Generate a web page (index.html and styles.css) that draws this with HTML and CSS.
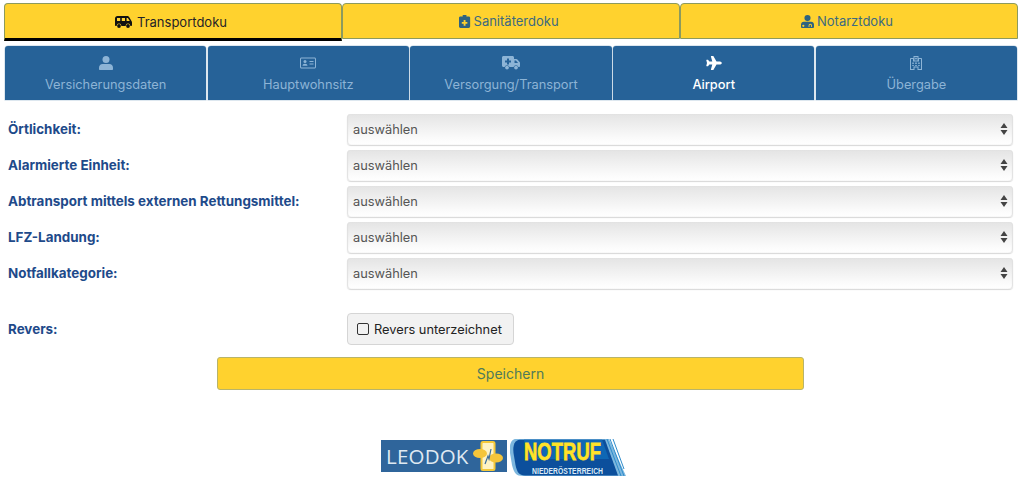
FILE: index.html
```html
<!DOCTYPE html>
<html lang="de">
<head>
<meta charset="utf-8">
<title>Airport</title>
<link rel="stylesheet" href="styles.css">
</head>
<body>
<nav class="doc-tabs">
  <a class="doc-tab active"><svg class="ic van" viewBox="0 0 17 12"><path fill-rule="evenodd" d="M2.500 0h9.500c1 0 1.800.5 2.300 1.300L16.500 5c.3.500.5 1 .5 1.600V9c0 .6-.4 1-1 1h-.6a2.400 2.400 0 0 0-4.800 0H6.400a2.400 2.400 0 0 0-4.800 0H1c-.6 0-1-.4-1-1V2.500C0 1.100 1.100 0 2.500 0zM2 2v3h3.200V2zm4.800 0v3H10V2zm4.800 0v3h3.200l-1.600-2.600c-.2-.3-.4-.4-.7-.4z"/><circle cx="4" cy="10" r="1.900"/><circle cx="13" cy="10" r="1.900"/></svg> Transportdoku</a>
  <a class="doc-tab"><svg class="ic clip" viewBox="0 0 12 14"><path fill-rule="evenodd" d="M4 0h4v1.500h2.500c.8 0 1.500.7 1.500 1.500v9.500c0 .8-.7 1.500-1.500 1.500h-9C.7 14 0 13.300 0 12.500V3c0-.8.7-1.500 1.500-1.500H4zM5 5.500v2H3v2h2v2h2v-2h2v-2H7v-2z"/></svg> Sanitäterdoku</a>
  <a class="doc-tab"><svg class="ic doc" viewBox="0 0 14 14"><circle cx="7" cy="3.300" r="3.300"/><path fill-rule="evenodd" d="M3 7.300h8c1.700 0 3 1.300 3 3V13c0 .6-.4 1-1 1H1c-.6 0-1-.4-1-1v-2.700c0-1.700 1.300-3 3-3zM2.500 12.800a1.200 1.200 0 1 0 0-2.400 1.200 1.200 0 0 0 0 2.400zM10 9.500c-1 0-1.800.8-1.800 1.800v1.500h.9v-1.500c0-.5.400-.9.900-.9s.9.400.9.900v1.500h.9v-1.500c0-1-.8-1.800-1.800-1.800z"/></svg> Notarztdoku</a>
</nav>

<nav class="sec-tabs">
  <a class="sec-tab"><svg class="sec-ic" viewBox="0 0 14 14"><circle cx="7" cy="3.500" r="3.500"/><path d="M3.500 8h7c1.900 0 3.500 1.600 3.500 3.500V13c0 .6-.4 1-1 1H1c-.6 0-1-.4-1-1v-1.500C0 9.600 1.600 8 3.500 8z"/></svg><span>Versicherungsdaten</span></a>
  <a class="sec-tab"><svg class="sec-ic" viewBox="0 0 16 14"><path fill-rule="evenodd" d="M1.500 1.500h13c.8 0 1.500.7 1.500 1.500v8c0 .8-.7 1.500-1.500 1.500h-13C.7 12.500 0 11.800 0 11V3c0-.8.7-1.500 1.500-1.500zm0 1a.5.500 0 0 0-.5.5v8c0 .3.2.5.5.5h13c.3 0 .5-.2.5-.5V3a.5.500 0 0 0-.5-.5z"/><circle cx="5" cy="5.600" r="1.500"/><path d="M2.500 9.800c0-1.300 1-2 2.500-2s2.500.7 2.500 2zM9.500 5h4v1h-4zM9.500 7.500h4v1h-4z"/></svg><span>Hauptwohnsitz</span></a>
  <a class="sec-tab"><svg class="sec-ic" viewBox="0 0 18 14"><path fill-rule="evenodd" d="M1.500 0h9C11.300 0 12 .7 12 1.500V3h2.300c.4 0 .8.200 1.100.500l2 2.200c.4.300.6.800.6 1.200V10c0 .6-.4 1-1 1h-.6a2.500 2.500 0 0 0-4.800 0H7.400a2.500 2.500 0 0 0-4.800 0H1.500C.7 11 0 10.300 0 9.500v-8C0 .7.700 0 1.500 0zM5 2.500v2H3v2h2v2h2v-2h2v-2H7v-2zM12.500 4.500V7h3.600l-2.200-2.500z"/><circle cx="5" cy="11.600" r="1.900"/><circle cx="14" cy="11.600" r="1.900"/></svg><span>Versorgung/Transport</span></a>
  <a class="sec-tab current"><svg class="sec-ic plane" viewBox="0 0 16 14"><path d="M15.800 7c0 1-1.400 1.500-2.300 1.500h-3l-3 5.200c-.1.200-.3.300-.5.300H5.300c-.3 0-.5-.3-.4-.6L6.300 8.500H3.400L2.200 10c-.1.100-.2.200-.4.200H.7c-.3 0-.5-.2-.4-.5L1 7 .3 4.300c-.1-.3.100-.5.400-.5h1.100c.2 0 .3.100.4.200l1.200 1.500h2.900L4.900.6C4.800.3 5 0 5.300 0H7c.2 0 .4.100.5.300l3 5.200h3c.9 0 2.300.5 2.300 1.500z"/></svg><span>Airport</span></a>
  <a class="sec-tab"><svg class="sec-ic" viewBox="0 0 12 14"><path fill-rule="evenodd" d="M3.500 0h5v2H11c.6 0 1 .4 1 1v11H7.500v-2.500h-3V14H0V3c0-.6.400-1 1-1h2.500zm1 1v3.500h3V1zM1 3v10h2.500v-2.500h5V13H11V3H9v2.500H3V3zM5.600 1.500h.8v.7h.7v.8h-.7v.7h-.8V3h-.7v-.8h.7zM2.300 6.500h1.500V8H2.300zM5.200 6.500h1.600V8H5.200zM8.200 6.500h1.500V8H8.200zM2.300 9h1.500v1H2.300zM8.200 9h1.500v1H8.200zM5.200 9h1.600v1H5.200z"/></svg><span>Übergabe</span></a>
</nav>

<form class="form">
  <div class="fields">
    <div class="row"><label class="lbl">Örtlichkeit:</label><div class="select"><span>auswählen</span><svg class="arrows" viewBox="0 0 8 12"><path d="M4 0l3.500 5H.5zM4 12L.5 7h7z"/></svg></div></div>
    <div class="row"><label class="lbl">Alarmierte Einheit:</label><div class="select"><span>auswählen</span><svg class="arrows" viewBox="0 0 8 12"><path d="M4 0l3.500 5H.5zM4 12L.5 7h7z"/></svg></div></div>
    <div class="row"><label class="lbl">Abtransport mittels externen Rettungsmittel:</label><div class="select"><span>auswählen</span><svg class="arrows" viewBox="0 0 8 12"><path d="M4 0l3.500 5H.5zM4 12L.5 7h7z"/></svg></div></div>
    <div class="row"><label class="lbl">LFZ-Landung:</label><div class="select"><span>auswählen</span><svg class="arrows" viewBox="0 0 8 12"><path d="M4 0l3.500 5H.5zM4 12L.5 7h7z"/></svg></div></div>
    <div class="row"><label class="lbl">Notfallkategorie:</label><div class="select"><span>auswählen</span><svg class="arrows" viewBox="0 0 8 12"><path d="M4 0l3.500 5H.5zM4 12L.5 7h7z"/></svg></div></div>
  </div>
  <div class="row revers"><label class="lbl">Revers:</label><div class="check-btn"><span class="box"></span>Revers unterzeichnet</div></div>
  <div class="save-wrap"><div class="save">Speichern</div></div>
</form>

<footer class="logos">
  <div class="leodok"><span class="leo-text">LEODOK</span><svg class="leo-mark" viewBox="0 0 30 32"><rect x="8.500" y="2" width="13" height="28" rx="1.500" fill="#fff3c4" stroke="#f5c93a" stroke-width="2"/><ellipse cx="7" cy="13.500" rx="7" ry="4.500" fill="#f5c53a"/><ellipse cx="23" cy="18" rx="7" ry="4.500" fill="#f5c53a"/><path d="M12 24l3-8 1 3 2-10" fill="none" stroke="#3b6d9c" stroke-width="1.200"/></svg></div>
  <div class="notruf">
    <svg class="notruf-bg" viewBox="0 0 116 37" preserveAspectRatio="none">
      <path d="M6 0H99L116 37H13C6 37 4 34 2 26L0 14C-1 6 1 0 6 0z" fill="#7db7de"/>
      <path d="M10 0.800H95L108 36.500H15C9 36.500 7 33 5.500 26L3.500 14C2.500 6 5 .8 10 .8z" fill="#0c4f9c"/>
      <path d="M14 .8H92L99 20H18z" fill="#0f67b4"/>
      <path d="M97 0l14 37M100 0l14 37M103 0l11 30" stroke="#2f8ccb" stroke-width="1"/>
    </svg>
    <span class="nt-big">NOTRUF</span>
    <span class="nt-small">NIEDERÖSTERREICH</span>
  </div>
</footer>
</body>
</html>
```

FILE: styles.css
```css
* { box-sizing: border-box; }
html, body { margin: 0; background: #fff; }
body {
  width: 1024px;
  height: 495px;
  overflow: hidden;
  font-family: Inter, "Liberation Sans", sans-serif;
  font-size: 14px;
  padding: 3px 6px 0 4px;
}
.doc-tabs { display: flex; height: 38px; align-items: flex-start; }
.doc-tab {
  flex: 1;
  height: 36px;
  background: #ffd22e;
  border: 1px solid #8c9a5e;
  border-radius: 4px 4px 0 0;
  display: flex;
  align-items: center;
  justify-content: center;
  gap: 3px;
  padding-right: 4px;
  color: #3c6a80;
  font-size: 13px;
}
.doc-tab.active {
  height: 38px;
  color: #1f2328;
  border-bottom: 3px solid #000;
  padding-top: 1px;
}
.ic { fill: #2f6380; height: 13px; width: auto; display: block; }
.van { fill: #111; height: 12px; margin-right: 2px; }
.sec-tabs { display: flex; gap: 1.500px; margin: 5px 1px 0 1px; height: 54px; }
.sec-tab {
  flex: 1;
  background: #266298;
  border-radius: 3px 3px 0 0;
  color: #8db4d6;
  display: flex;
  flex-direction: column;
  align-items: center;
  font-size: 12.800px;
  padding-top: 10px;
  box-shadow: 0 0 0 .5px #bcd0e0;
}
.sec-tab span { margin-top: 6px; line-height: 17px; }
.sec-ic { height: 14px; width: auto; fill: #8db4d6; display: block; }
.sec-tab.current { color: #fff; font-weight: 500; }
.sec-tab.current .sec-ic { fill: #fff; }
.form { padding-top: 13.500px; }
.fields { display: flex; flex-direction: column; gap: 4.500px; }
.row { display: flex; align-items: center; height: 31.500px; }
.lbl {
  width: 343px;
  padding-left: 4px;
  font-weight: 700;
  font-size: 13.400px;
  color: #1e4a8a;
  flex: none;
  white-space: nowrap;
}
.select {
  width: 666px;
  height: 31.500px;
  border-radius: 4px;
  display: flex;
  align-items: center;
  justify-content: space-between;
  padding: 0 5px 0 6px;
  color: #555;
  font-size: 12.800px;
  background: linear-gradient(#e4e4e4, #fbfbfb 80%, #fff);
  box-shadow: inset 1px 0 1px #e0e0e0, inset -1px 0 1px #e0e0e0, 0 1px 1px #d8d8d8;
}
.arrows { width: 8px; height: 12px; fill: #444; }
.revers { margin-top: 24px; height: 32px; }
.check-btn {
  height: 32px;
  width: 167px;
  border: 1px solid #d5d5d5;
  border-radius: 4px;
  background: #f2f2f2;
  display: flex;
  align-items: center;
  padding-left: 9px;
  gap: 5px;
  color: #222;
  font-size: 12.800px;
  white-space: nowrap;
}
.box { width: 12px; height: 12px; border: 1.500px solid #333; border-radius: 2px; flex: none; }
.save-wrap { display: flex; justify-content: center; margin-top: 12px; padding-left: 1px; padding-right: 2px; }
.save {
  width: 587px;
  height: 33px;
  background: #ffd22e;
  border: 1px solid #b8b46a;
  border-radius: 3px;
  color: #4f7a5a;
  font-size: 14px;
  display: flex;
  align-items: center;
  justify-content: center;
}
.logos { display: flex; margin-top: 49px; padding-left: 377px; align-items: flex-start; gap: 3px; height: 37px; }
.leodok {
  width: 126px;
  height: 32px;
  margin-top: 1px;
  background: #2f659b;
  display: flex;
  align-items: center;
  padding-left: 5px;
  position: relative;
}
.leo-text { color: #dfe9f2; font-size: 20.500px; letter-spacing: .2px; font-family: "Open Sans", sans-serif; }
.leo-mark { width: 30px; height: 32px; position: absolute; right: 4px; top: 0; }
.notruf {
  width: 116px;
  height: 37px;
  position: relative;
  font-family: "Liberation Sans", sans-serif;
  font-weight: 700;
}
.notruf-bg { position: absolute; inset: 0; width: 100%; height: 100%; }
.nt-big {
  position: absolute;
  left: 14px;
  top: 3.500px;
  color: #ffe32a;
  font-size: 18.500px;
  line-height: .72;
  transform: scaleY(1.270);
  transform-origin: top left;
  -webkit-text-stroke: .6px #ffe32a;
  text-shadow: 1px 0 0 #0a2f6c;
}
.nt-small {
  position: absolute;
  left: 22px;
  top: 28.500px;
  color: #dcebf6;
  font-size: 6.800px;
  line-height: .8;
  letter-spacing: .05px;
  transform: scaleY(1.200);
  transform-origin: top left;
  white-space: nowrap;
}
```
